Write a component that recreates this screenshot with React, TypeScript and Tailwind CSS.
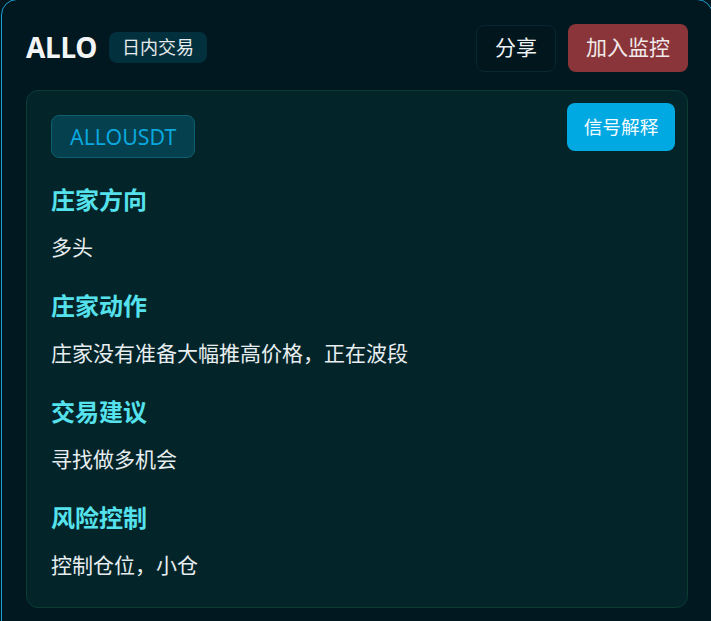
import React from "react";

const font = { fontFamily: '"Noto Sans", "Noto Sans CJK SC", sans-serif' };

function Section({ title, body, first }: { title: string; body: string; first?: boolean }) {
  return (
    <div className={first ? "mt-[24px]" : "mt-[25px]"}>
      <div className="text-[24px] leading-[36px] font-bold text-[#55e2ec]">{title}</div>
      <div className="mt-[13px] text-[21px] leading-[32px] text-[#e8eef0]">{body}</div>
    </div>
  );
}

export default function App() {
  return (
    <div className="w-[711px] h-[621px] overflow-hidden bg-[#011820]" style={font}>
      <div className="ml-px -mt-px w-[712px] h-[700px] rounded-2xl border border-[#1a9fd0] bg-[#011820] px-6 pt-6">
        <div className="flex items-center h-12 mb-[18px]">
          <div className="text-[28px] font-bold text-[#f2f4f5] leading-none -mt-[2px] tracking-[-0.3px]">ALLO</div>
          <div className="ml-3 h-[31px] px-[13px] rounded-lg bg-[#03303d] text-[18px] text-[#e5ebee] flex items-center -mt-[2px]">
            日内交易
          </div>
          <div className="ml-auto flex items-center gap-3">
            <button className="h-[47px] px-[18px] rounded-lg border border-[#0a2630] bg-[#01161d] text-[21px] text-[#eef2f3]">
              分享
            </button>
            <button className="h-12 px-[18px] rounded-lg bg-[#8a3539] text-[21px] text-[#f1e9ea]">
              加入监控
            </button>
          </div>
        </div>
        <div className="relative rounded-xl border border-[#0c3b32] bg-[#03252a] px-6 pt-6 pb-[26px]">
          <button className="absolute top-3 right-3 h-12 w-[108px] rounded-lg bg-[#00a9e2] text-[18.67px] text-[#f4fbfe]">
            信号解释
          </button>
          <div className="inline-flex items-center h-[43px] px-[18px] rounded-lg border border-[#0d5f70] bg-[#04404e] text-[21.33px] text-[#0ba7de]">
            ALLOUSDT
          </div>
          <Section first title="庄家方向" body="多头" />
          <Section title="庄家动作" body="庄家没有准备大幅推高价格，正在波段" />
          <Section title="交易建议" body="寻找做多机会" />
          <Section title="风险控制" body="控制仓位，小仓" />
        </div>
      </div>
    </div>
  );
}
